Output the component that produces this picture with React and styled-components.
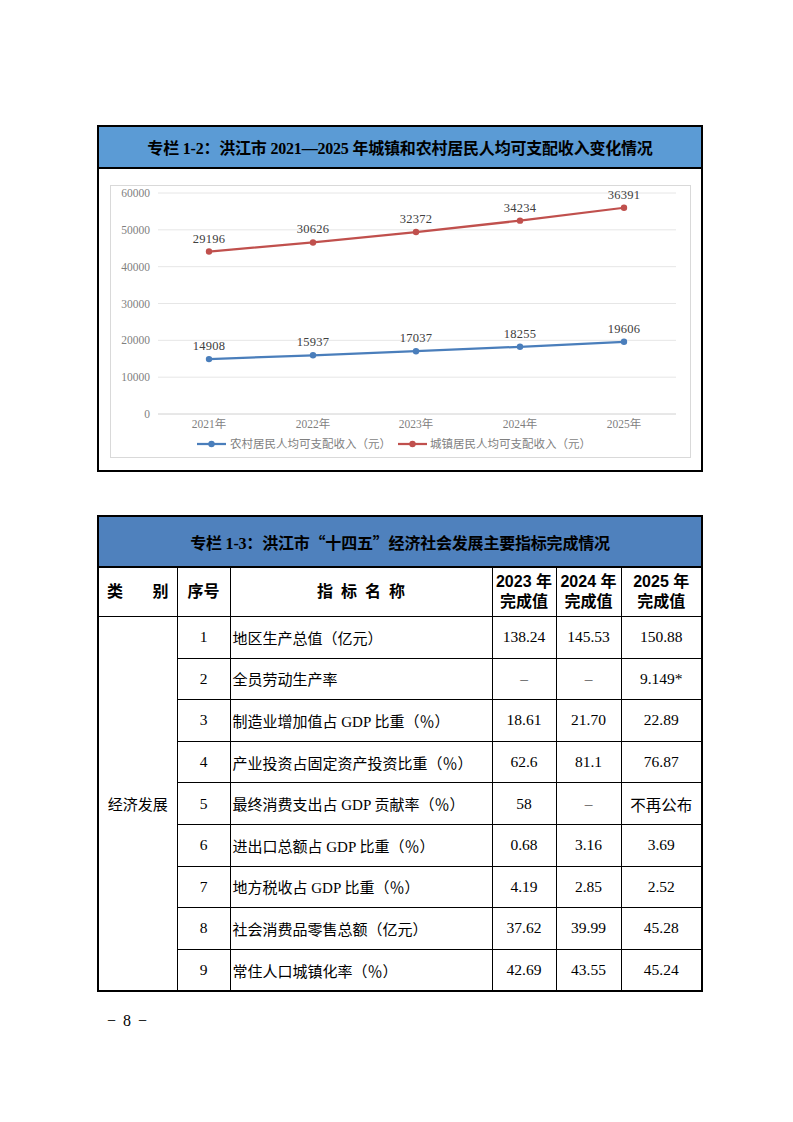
import React from 'react';
import styled, { createGlobalStyle } from 'styled-components';

const GlobalStyle = createGlobalStyle`
  html, body { margin: 0; padding: 0; background: #fff; }
  body { font-family: "Liberation Serif", "Noto Sans CJK SC", serif; color: #000; }
`;

const Page = styled.div`
  width: 793px;
  min-height: 1122px;
  box-sizing: border-box;
  padding: 125px 90px 0 97px;
  display: flex;
  flex-direction: column;
`;

const Panel = styled.section`
  width: 606px;
  box-sizing: border-box;
  border: 2px solid #000;
  background: #fff;
  & + & { margin-top: 43px; }
`;

const PanelTitle = styled.h2`
  margin: 0;
  height: ${p => p.$h}px;
  background: ${p => p.$bg};
  border-bottom: 2px solid #000;
  display: flex;
  align-items: center;
  justify-content: center;
  font-family: "Liberation Serif", "Noto Sans CJK SC", serif;
  font-weight: 700;
  font-size: 16px;
  letter-spacing: -0.2px;
  color: #000;
`;

const CjkPunct = styled.span`
  font-family: "Noto Sans CJK SC", sans-serif;
`;

const ChartWrap = styled.div`
  padding: 16px 10px 12px 11px;
`;

const ChartFrame = styled.div`
  width: 581px;
  height: 273px;
  box-sizing: border-box;
  border: 1px solid #d9d9d9;
  background: #fff;
`;

const Table = styled.table`
  width: 100%;
  border-collapse: collapse;
  border-style: hidden;
  table-layout: fixed;
`;

const HeadCell = styled.th`
  border: 1px solid #000;
  height: 48px;
  padding: 0;
  font-family: "Liberation Sans", "Noto Sans CJK SC", sans-serif;
  font-weight: 700;
  font-size: 16px;
  line-height: 20px;
  text-align: center;
  vertical-align: middle;
`;

const Spread = styled.div`
  display: flex;
  justify-content: space-between;
  padding: 0 8px;
`;

const Spaced = styled.span`
  letter-spacing: 8px;
  padding-left: 8px;
`;

const Cell = styled.td`
  border: 1px solid #000;
  height: 40.6px;
  padding: 0 ${p => (p.$left ? '2px' : '0')};
  font-family: "Liberation Serif", "Noto Sans CJK SC", serif;
  font-size: ${p => (p.$num ? '15.5px' : '15px')};
  text-align: ${p => (p.$left ? 'left' : 'center')};
  vertical-align: middle;
  white-space: nowrap;
`;

const PageNum = styled.div`
  margin: 20px 0 0 10px;
  font-family: "Liberation Serif", serif;
  font-size: 16px;
  word-spacing: 3px;
`;

const xs = [99, 203, 306, 410, 514];
const years = ['2021年', '2022年', '2023年', '2024年', '2025年'];
const rural = [14908, 15937, 17037, 18255, 19606];
const urban = [29196, 30626, 32372, 34234, 36391];
const yOf = v => 229 - v * (221 / 60000);

const BLUE = '#4a7ebb';
const RED = '#c0504d';

function Chart() {
  const ticks = [0, 10000, 20000, 30000, 40000, 50000, 60000];
  const ruralPts = rural.map((v, i) => [xs[i], yOf(v)]);
  const urbanPts = urban.map((v, i) => [xs[i], yOf(v + rural[i])]);
  const toPath = pts => pts.map((p, i) => `${i ? 'L' : 'M'}${p[0]},${p[1]}`).join(' ');
  return (
    <svg width="579" height="271" viewBox="1 1 579 271">
      {ticks.map(t => (
        <g key={t}>
          <line x1="48" x2="566" y1={yOf(t)} y2={yOf(t)} stroke={t === 0 ? '#d0d0d0' : '#e6e6e6'} strokeWidth="1" />
          <text x="40" y={yOf(t) + 4} textAnchor="end" fontSize="11.5" fill="#7f7f7f" fontFamily="Liberation Serif, serif">{t}</text>
        </g>
      ))}
      {years.map((y, i) => (
        <text key={y} x={xs[i]} y="243" textAnchor="middle" fontSize="11.5" fill="#7f7f7f" fontFamily="Liberation Serif, Noto Sans CJK SC, serif">{y}</text>
      ))}
      <path d={toPath(ruralPts)} fill="none" stroke={BLUE} strokeWidth="2.25" strokeLinejoin="round" />
      <path d={toPath(urbanPts)} fill="none" stroke={RED} strokeWidth="2.25" strokeLinejoin="round" />
      {ruralPts.map((p, i) => (
        <g key={'r' + i}>
          <circle cx={p[0]} cy={p[1]} r="3.2" fill={BLUE} />
          <text x={p[0]} y={p[1] - 9} textAnchor="middle" fontSize="12.5" fill="#404040" fontFamily="Liberation Serif, serif" letterSpacing="0.3">{rural[i]}</text>
        </g>
      ))}
      {urbanPts.map((p, i) => (
        <g key={'u' + i}>
          <circle cx={p[0]} cy={p[1]} r="3.2" fill={RED} />
          <text x={p[0]} y={p[1] - 9} textAnchor="middle" fontSize="12.5" fill="#404040" fontFamily="Liberation Serif, serif" letterSpacing="0.3">{urban[i]}</text>
        </g>
      ))}
      <line x1="87" x2="116" y1="259" y2="259" stroke={BLUE} strokeWidth="2.25" />
      <circle cx="101.5" cy="259" r="3.2" fill={BLUE} />
      <text x="120" y="263" fontSize="11.5" fill="#7f7f7f" fontFamily="Liberation Serif, Noto Sans CJK SC, serif">农村居民人均可支配收入（元）</text>
      <line x1="288" x2="317" y1="259" y2="259" stroke={RED} strokeWidth="2.25" />
      <circle cx="302.5" cy="259" r="3.2" fill={RED} />
      <text x="320" y="263" fontSize="11.5" fill="#7f7f7f" fontFamily="Liberation Serif, Noto Sans CJK SC, serif">城镇居民人均可支配收入（元）</text>
    </svg>
  );
}

const rows = [
  ['1', '地区生产总值（亿元）', '138.24', '145.53', '150.88'],
  ['2', '全员劳动生产率', '–', '–', '9.149*'],
  ['3', '制造业增加值占 GDP 比重（％）', '18.61', '21.70', '22.89'],
  ['4', '产业投资占固定资产投资比重（％）', '62.6', '81.1', '76.87'],
  ['5', '最终消费支出占 GDP 贡献率（％）', '58', '–', '不再公布'],
  ['6', '进出口总额占 GDP 比重（％）', '0.68', '3.16', '3.69'],
  ['7', '地方税收占 GDP 比重（％）', '4.19', '2.85', '2.52'],
  ['8', '社会消费品零售总额（亿元）', '37.62', '39.99', '45.28'],
  ['9', '常住人口城镇化率（％）', '42.69', '43.55', '45.24'],
];

export default function App() {
  return (
    <>
      <GlobalStyle />
      <Page>
        <Panel>
          <PanelTitle $h={40} $bg="#5b9bd5">专栏 1-2：洪江市 2021—2025 年城镇和农村居民人均可支配收入变化情况</PanelTitle>
          <ChartWrap>
            <ChartFrame>
              <Chart />
            </ChartFrame>
          </ChartWrap>
        </Panel>
        <Panel>
          <PanelTitle $h={49} $bg="#4f81bd">
            专栏 1-3：洪江市<CjkPunct>“</CjkPunct>十四五<CjkPunct>”</CjkPunct>经济社会发展主要指标完成情况
          </PanelTitle>
          <Table>
            <colgroup>
              <col style={{ width: '78px' }} />
              <col style={{ width: '53px' }} />
              <col style={{ width: '262px' }} />
              <col style={{ width: '64px' }} />
              <col style={{ width: '65px' }} />
              <col style={{ width: '80px' }} />
            </colgroup>
            <thead>
              <tr>
                <HeadCell><Spread><span>类</span><span>别</span></Spread></HeadCell>
                <HeadCell>序号</HeadCell>
                <HeadCell><Spaced>指标名称</Spaced></HeadCell>
                <HeadCell>2023 年<br />完成值</HeadCell>
                <HeadCell>2024 年<br />完成值</HeadCell>
                <HeadCell>2025 年<br />完成值</HeadCell>
              </tr>
            </thead>
            <tbody>
              {rows.map((r, i) => (
                <tr key={r[0]}>
                  {i === 0 && <Cell rowSpan={9}>经济发展</Cell>}
                  <Cell $num>{r[0]}</Cell>
                  <Cell $left>{r[1]}</Cell>
                  <Cell $num>{r[2]}</Cell>
                  <Cell $num>{r[3]}</Cell>
                  <Cell $num>{r[4]}</Cell>
                </tr>
              ))}
            </tbody>
          </Table>
        </Panel>
        <PageNum>− 8 −</PageNum>
      </Page>
    </>
  );
}
